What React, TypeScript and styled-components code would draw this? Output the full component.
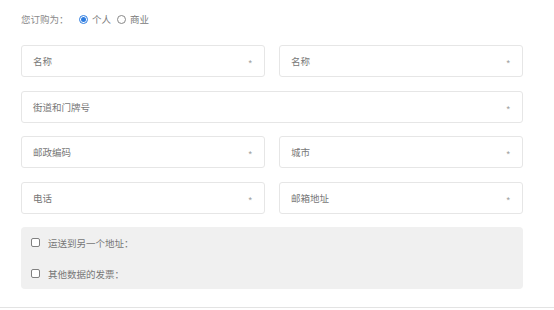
import styled, { createGlobalStyle } from "styled-components";

const GlobalStyle = createGlobalStyle`
  body {
    margin: 0;
    background: #fff;
    font-family: "Noto Sans CJK SC", "Noto Sans", sans-serif;
  }
`;

const StyledPage = styled.div`
  width: 554px;
  height: 310px;
  box-sizing: border-box;
  padding: 0 31px 0 21px;
  position: relative;
`;

const StyledTypeRow = styled.div`
  display: flex;
  align-items: center;
  height: 38px;
  margin-bottom: 7px;
  font-size: 9.5px;
  color: #8a8a8a;
`;

const StyledTypeLabel = styled.span`
  width: 58px;
`;

const StyledOption = styled.label`
  display: flex;
  align-items: center;
  gap: 4px;
  margin-right: 6px;
  color: #7a7a7a;
`;

const StyledRadio = styled.span<{ $checked?: boolean }>`
  width: 9px;
  height: 9px;
  box-sizing: border-box;
  border-radius: 50%;
  border: 1px solid ${(p) => (p.$checked ? "#2d7ce0" : "#888")};
  display: flex;
  align-items: center;
  justify-content: center;

  &::after {
    content: "";
    width: 5px;
    height: 5px;
    border-radius: 50%;
    background: ${(p) => (p.$checked ? "#2d7ce0" : "transparent")};
  }
`;

const StyledGrid = styled.div`
  display: grid;
  grid-template-columns: 1fr 1fr;
  column-gap: 14px;
  row-gap: 13.5px;
`;

const StyledField = styled.div<{ $wide?: boolean }>`
  grid-column: ${(p) => (p.$wide ? "1 / -1" : "auto")};
  height: 32px;
  box-sizing: border-box;
  border: 1px solid #e6e6e6;
  border-radius: 3px;
  display: flex;
  align-items: center;
  justify-content: space-between;
  padding: 0 12px 0 11px;
  font-size: 9.5px;
  color: #777;
`;

const StyledStar = styled.span`
  color: #9a9a9a;
  font-size: 9px;
  font-family: "Liberation Sans", sans-serif;
  transform: translateY(1.5px);
`;

const StyledExtras = styled.div`
  grid-column: 1 / -1;
  height: 62px;
  background: #f0f0f0;
  border-radius: 4px;
  display: flex;
  flex-direction: column;
  justify-content: space-around;
  padding: 0 10px;
`;

const StyledCheckRow = styled.label`
  display: flex;
  align-items: center;
  gap: 8px;
  font-size: 9.5px;
  color: #777;
`;

const StyledCheckbox = styled.span`
  width: 9px;
  height: 9px;
  box-sizing: border-box;
  border: 1px solid #808080;
  border-radius: 2px;
  background: #fff;
`;

const StyledDivider = styled.div`
  position: absolute;
  left: 0;
  right: 0;
  top: 307px;
  border-top: 1px solid #e3e3e3;
`;

const fields: { label: string; wide?: boolean }[] = [
  { label: "名称" },
  { label: "名称" },
  { label: "街道和门牌号", wide: true },
  { label: "邮政编码" },
  { label: "城市" },
  { label: "电话" },
  { label: "邮箱地址" },
];

const App = () => {
  return (
    <>
      <GlobalStyle />
      <StyledPage>
        <StyledTypeRow>
          <StyledTypeLabel>您订购为：</StyledTypeLabel>
          <StyledOption>
            <StyledRadio $checked />
            个人
          </StyledOption>
          <StyledOption>
            <StyledRadio />
            商业
          </StyledOption>
        </StyledTypeRow>
        <StyledGrid>
          {fields.map((f, i) => (
            <StyledField key={i} $wide={f.wide}>
              {f.label}
              <StyledStar>*</StyledStar>
            </StyledField>
          ))}
          <StyledExtras>
            <StyledCheckRow>
              <StyledCheckbox />
              运送到另一个地址：
            </StyledCheckRow>
            <StyledCheckRow>
              <StyledCheckbox />
              其他数据的发票：
            </StyledCheckRow>
          </StyledExtras>
        </StyledGrid>
        <StyledDivider />
      </StyledPage>
    </>
  );
};

export default App;
